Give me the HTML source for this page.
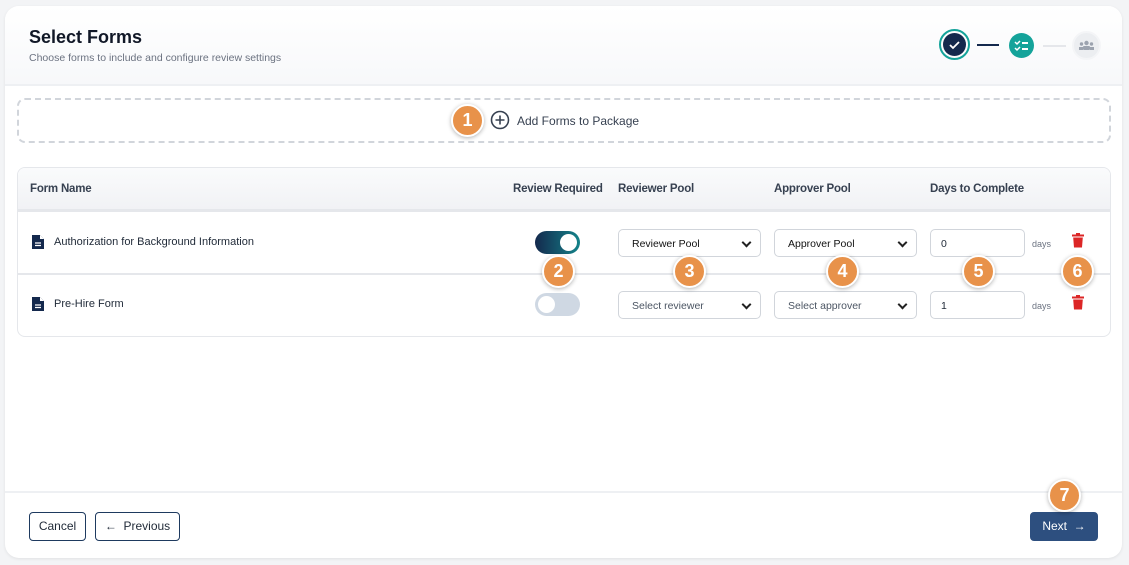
<!DOCTYPE html>
<html><head><style>
*{box-sizing:border-box;margin:0;padding:0}
body{width:1129px;height:565px;background:#f3f4f6;font-family:"Liberation Sans",sans-serif;position:relative;overflow:hidden;color:#1f2937}
.card{position:absolute;left:5px;top:6px;width:1117px;height:552px;background:#fff;border-radius:14px;box-shadow:0 1px 3px rgba(0,0,0,.08);overflow:hidden}
.hdr{position:absolute;left:0;top:0;width:100%;height:80px;background:linear-gradient(#fff,#f7f8fa);border-bottom:2px solid #eef0f3}
.a{position:absolute}
.title{left:24px;top:21px;font-size:18px;font-weight:bold;color:#111827}
.sub{left:24px;top:46px;font-size:10.5px;color:#6b7280}
.dash{left:12px;top:92px;width:1094px;height:45px;border:2px dashed #d1d5db;border-radius:8px}
.tbl{left:12px;top:161px;width:1094px;height:170px;border:1px solid #e5e7eb;border-radius:8px;overflow:hidden}
.th{position:absolute;left:0;top:0;width:100%;height:44px;background:linear-gradient(#fafbfc,#f1f2f5);border-bottom:3px solid #e5e7eb}
.hl{position:absolute;top:15px;font-size:11.5px;font-weight:bold;color:#374151;letter-spacing:-0.2px}
.rowline{position:absolute;left:0;top:105px;width:100%;height:2px;background:#e5e7eb}
.fn{position:absolute;font-size:11px;color:#1f2937}
.sel{position:absolute;width:143px;height:28px;border:1px solid #d1d5db;border-radius:5px;font-size:10.5px;padding:8px 13px;color:#111}
.sel.g{color:#4b5563}
.sel:after{content:"";position:absolute;right:10px;top:9px;width:5px;height:5px;border-right:2px solid #222;border-bottom:2px solid #222;transform:rotate(45deg)}
.inp{position:absolute;width:95px;height:28px;border:1px solid #d1d5db;border-radius:5px;font-size:10.5px;padding:8px 10px}
.days{position:absolute;font-size:9px;color:#6b7280}
.tg{position:absolute;width:45px;height:23px;border-radius:12px}
.tg i{position:absolute;top:3px;width:17px;height:17px;border-radius:50%;background:#fff}
.b{position:absolute;width:33px;height:33px;border-radius:50%;background:#e8924a;border:2px solid #fff;box-shadow:0 1px 4px rgba(0,0,0,.3);color:#fff;font-weight:bold;font-size:18px;text-align:center;line-height:29px;z-index:5}
.btn{position:absolute;height:29px;border:1.5px solid #1e3a5f;border-radius:4px;font-size:12px;color:#1f2937;text-align:center;line-height:27px}
.foot{position:absolute;left:0;top:485px;width:100%;height:2px;background:#eef0f3}
</style></head><body>
<div class="card">
<div class="hdr"></div>
<div class="a title">Select Forms</div>
<div class="a sub">Choose forms to include and configure review settings</div>
<div class="a" style="left:934px;top:23px;width:31px;height:31px;border-radius:50%;border:2px solid #14a39a;padding:2px"><div style="width:23px;height:23px;border-radius:50%;background:#14294d;position:relative"><svg width="23" height="23" style="position:absolute;left:0;top:0"><path d="M7 12l3 3 6-6" stroke="#fff" stroke-width="1.8" fill="none"/></svg></div></div>
<div class="a" style="left:972px;top:38px;width:22px;height:2px;background:#14294d"></div>
<div class="a" style="left:1004px;top:27px;width:25px;height:25px;border-radius:50%;background:#14a39a"><svg width="25" height="25"><path d="M6 9l2 2 3-3M6 15l2 2 3-3" stroke="#fff" stroke-width="1.5" fill="none"/><path d="M13 10h6M13 16h6" stroke="#fff" stroke-width="2"/></svg></div>
<div class="a" style="left:1038px;top:39px;width:23px;height:2px;background:#e5e7eb"></div>
<div class="a" style="left:1067px;top:25px;width:29px;height:29px;border-radius:50%;background:#eceef1;border:2px solid #f4f5f7"><svg width="25" height="25"><circle cx="12.5" cy="10" r="2.2" fill="#9ca3af"/><circle cx="7.5" cy="11" r="1.7" fill="#9ca3af"/><circle cx="17.5" cy="11" r="1.7" fill="#9ca3af"/><rect x="9" y="13" width="7" height="4" rx="1" fill="#9ca3af"/><rect x="5" y="14" width="4" height="3" fill="#9ca3af"/><rect x="16" y="14" width="4" height="3" fill="#9ca3af"/></svg></div>

<div class="a dash"></div>
<div class="a" style="left:485px;top:104px"><svg width="20" height="20"><circle cx="10" cy="10" r="8.5" stroke="#374151" stroke-width="1.6" fill="none"/><path d="M10 5.5v9M5.5 10h9" stroke="#374151" stroke-width="1.6"/></svg></div>
<div class="a" style="left:512px;top:108px;font-size:12px;color:#374151">Add Forms to Package</div>

<div class="a tbl">
<div class="th"></div>
<div class="hl" style="left:12px">Form Name</div>
<div class="hl" style="left:495px">Review Required</div>
<div class="hl" style="left:600px">Reviewer Pool</div>
<div class="hl" style="left:756px">Approver Pool</div>
<div class="hl" style="left:912px">Days to Complete</div>
<div class="rowline"></div>
<svg class="a" style="left:14px;top:67px" width="12" height="14"><path d="M0 0h8l4 4v10H0z" fill="#14294d"/><path d="M8 0v4h4" fill="#fff"/><path d="M3 8h6M3 10.5h6" stroke="#fff" stroke-width="1.2"/></svg>
<div class="fn" style="left:36px;top:68px">Authorization for Background Information</div>
<svg class="a" style="left:14px;top:129px" width="12" height="14"><path d="M0 0h8l4 4v10H0z" fill="#14294d"/><path d="M8 0v4h4" fill="#fff"/><path d="M3 8h6M3 10.5h6" stroke="#fff" stroke-width="1.2"/></svg>
<div class="fn" style="left:36px;top:130px">Pre-Hire Form</div>
<div class="tg" style="left:517px;top:63px;background:linear-gradient(90deg,#14294d,#14838a)"><i style="left:25px"></i></div>
<div class="tg" style="left:517px;top:125px;background:#cfd8e3"><i style="left:3px"></i></div>
<div class="sel" style="left:600px;top:61px">Reviewer Pool</div>
<div class="sel g" style="left:600px;top:123px">Select reviewer</div>
<div class="sel" style="left:756px;top:61px">Approver Pool</div>
<div class="sel g" style="left:756px;top:123px">Select approver</div>
<div class="inp" style="left:912px;top:61px">0</div>
<div class="inp" style="left:912px;top:123px">1</div>
<div class="days" style="left:1014px;top:71px">days</div>
<div class="days" style="left:1014px;top:133px">days</div>
<svg class="a" style="left:1054px;top:65px" width="12" height="15"><rect x="0" y="1.5" width="12" height="2" fill="#dc2626"/><rect x="4" y="0" width="4" height="2" fill="#dc2626"/><path d="M1.2 4.5h9.6l-0.8 10H2z" fill="#dc2626"/></svg>
<svg class="a" style="left:1054px;top:127px" width="12" height="15"><rect x="0" y="1.5" width="12" height="2" fill="#dc2626"/><rect x="4" y="0" width="4" height="2" fill="#dc2626"/><path d="M1.2 4.5h9.6l-0.8 10H2z" fill="#dc2626"/></svg>
</div>

<div class="foot"></div>
<div class="btn" style="left:24px;top:506px;width:57px">Cancel</div>
<div class="btn" style="left:90px;top:506px;width:85px">&#8592;&nbsp; Previous</div>
<div class="btn" style="left:1025px;top:506px;width:68px;background:#2d4f7f;border-color:#2d4f7f;color:#fff">Next &nbsp;&#8594;</div>
</div>
<div class="b" style="left:451px;top:104px">1</div>
<div class="b" style="left:542px;top:255px">2</div>
<div class="b" style="left:673px;top:255px">3</div>
<div class="b" style="left:826px;top:255px">4</div>
<div class="b" style="left:962px;top:255px">5</div>
<div class="b" style="left:1061px;top:255px">6</div>
<div class="b" style="left:1048px;top:479px">7</div>
</body></html>
